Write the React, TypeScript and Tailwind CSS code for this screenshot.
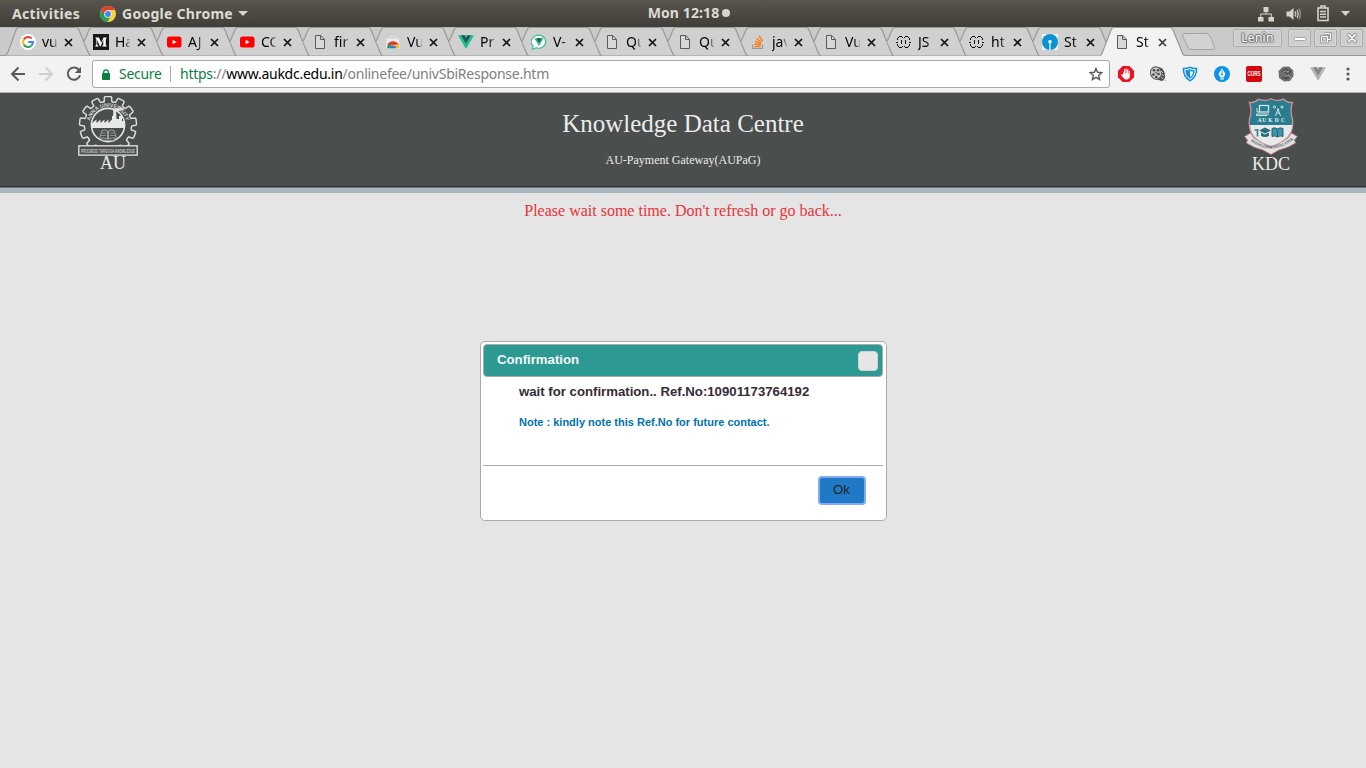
import type { ReactNode } from "react";

const ui = "font-['Noto_Sans','Open_Sans',sans-serif]";

function ChromeLogo() {
  return (
    <svg width="16" height="16" viewBox="0 0 16 16">
      <circle cx="8" cy="8" r="8" fill="#fdd13a" />
      <path d="M8 8 L1.1 4 A8 8 0 0 0 7.2 16 L11.2 9.8 Z" fill="#1fa05a" />
      <path d="M1.1 4 A8 8 0 0 1 14.9 4 L8 4 L4.9 10 Z" fill="#e0422f" />
      <circle cx="8" cy="8" r="3.8" fill="#f4f4f4" />
      <circle cx="8" cy="8" r="2.9" fill="#4285f4" />
    </svg>
  );
}

function GoogleIcon() {
  return (
    <svg width="16" height="16" viewBox="0 0 16 16" fill="none" strokeWidth="2.1">
      <circle cx="8" cy="8" r="8" fill="#fff" />
      <path d="M11.6 4.6 A5 5 0 0 0 3.7 5.5" stroke="#ea4335" />
      <path d="M3.7 5.5 A5 5 0 0 0 3.7 10.5" stroke="#fbbc05" />
      <path d="M3.7 10.5 A5 5 0 0 0 11.3 11.7" stroke="#34a853" />
      <path d="M11.3 11.7 A5 5 0 0 0 13 8 H8.2" stroke="#4285f4" />
    </svg>
  );
}

function MediumIcon() {
  return (
    <svg width="16" height="16" viewBox="0 0 16 16">
      <rect width="16" height="16" fill="#181818" />
      <path d="M2.5 3.5 H6 L8.3 8.7 L10.5 3.5 H13.7 V4.3 L12.8 5 V11 L13.7 11.7 V12.5 H9.3 V11.7 L10.3 11 V5.8 L7.6 12.4 H7.1 L4.2 6 V10.5 L5.4 12 V12.5 H2.3 V12 L3.4 10.5 V5.2 L2.5 4.2Z" fill="#fff" />
    </svg>
  );
}

function YoutubeIcon() {
  return (
    <svg width="16" height="16" viewBox="0 0 16 16">
      <rect x="1" y="2.5" width="14.5" height="11" rx="2.6" fill="#f00" />
      <path d="M6.6 5.7 L10.6 8 L6.6 10.3Z" fill="#fff" />
    </svg>
  );
}

function FileIcon() {
  return (
    <svg width="16" height="16" viewBox="0 0 16 16" fill="none" stroke="#5a5a5a">
      <path d="M3.5 1.5 H8.7 L12.5 5.3 V14.5 H3.5 Z" fill="#d8d8d8" />
      <path d="M8.5 1.5 V5.5 H12.5" />
    </svg>
  );
}

function StoreIcon() {
  return (
    <svg width="16" height="16" viewBox="0 0 16 16">
      <path d="M5 5 V2 H11 V5" fill="none" stroke="#ddd" strokeWidth="1.4" />
      <path d="M1.5 4.5 H14 L14.5 14.5 H1Z" fill="#ececec" />
      <path d="M2 14.3 A6 6 0 0 1 5 9 L8 14.3Z" fill="#22a35a" />
      <path d="M2.3 10.8 A6.2 6 0 0 1 13.7 10.8 L8 11.3Z" fill="#e33b2e" />
      <path d="M13.6 10.5 A6 6 0 0 1 14 14.3 H8 L10 10.5Z" fill="#fbc116" />
      <path d="M5 14.3 A3 2.8 0 0 1 11 14.3Z" fill="#3779e3" />
    </svg>
  );
}

function VueIcon({ outer = "#41b883", inner = "#34495e" }: { outer?: string; inner?: string }) {
  return (
    <svg width="16" height="16" viewBox="0 0 16 16">
      <path d="M0 1.3 H16 L8 15Z" fill={outer} />
      <path d="M3.2 1.3 H6.3 L8 4.2 L9.7 1.3 H12.8 L8 9.5Z" fill={inner} />
    </svg>
  );
}

function VueChatIcon() {
  return (
    <svg width="16" height="16" viewBox="0 0 16 16">
      <path d="M2.2 12.2 A7.3 6.5 0 1 1 5 13.8 L1.3 15.2Z" fill="#fff" stroke="#33bf8c" strokeWidth="1.1" />
      <path d="M3.4 4.2 H12.6 L8 12Z" fill="#27bd85" />
      <path d="M5.5 4.2 H10.5 L8 8.8Z" fill="#34495e" />
    </svg>
  );
}

function StackIcon() {
  return (
    <svg width="16" height="16" viewBox="0 0 16 16" fill="none">
      <path d="M2.5 10.5 V14.5 H12.5 V10.5" stroke="#999" strokeWidth="1.2" />
      <path d="M4.2 12.6 H10.6 M4.3 10 L10.6 11.3 M5 7.2 L11 10 M6.6 4.3 L11.6 8.5 M9 1.8 L12.6 7" stroke="#ff7a10" strokeWidth="1.4" />
    </svg>
  );
}

function BracesIcon() {
  return (
    <svg width="16" height="16" viewBox="0 0 16 16" fill="none" stroke="#111" shapeRendering="crispEdges">
      <path d="M3 2.5 H6 M9 2.5 H12 M3 13.5 H6 M9 13.5 H12 M2 3.5 H3 M6 3.5 H7 M8 3.5 H9 M12 3.5 H13 M2 12.5 H3 M6 12.5 H7 M8 12.5 H9 M12 12.5 H13 M0 8.5 H2 M13 8.5 H15" />
      <path d="M1.5 4 V6 M13.5 4 V6 M1.5 10 V12 M13.5 10 V12 M5.5 6 V10 M9.5 6 V10" />
    </svg>
  );
}

function SbiIcon() {
  return (
    <svg width="16" height="16" viewBox="0 0 16 16">
      <rect width="16" height="16" fill="#eef3f5" />
      <circle cx="8" cy="8" r="8" fill="#0c93cf" />
      <circle cx="8" cy="7.8" r="1.8" fill="#fff" />
      <path d="M7.4 8 H8.6 V16 H7.4Z" fill="#fff" />
    </svg>
  );
}

function CloseMark({ active }: { active?: boolean }) {
  return (
    <svg width="9" height="9" viewBox="0 0 9 9" stroke={active ? "#3c3c3c" : "#111"} strokeWidth="1.7">
      <path d="M1 1 L8 8 M8 1 L1 8" />
    </svg>
  );
}

const tabs: { icon: ReactNode; label: string }[] = [
  { icon: <GoogleIcon />, label: "vu" },
  { icon: <MediumIcon />, label: "Ha" },
  { icon: <YoutubeIcon />, label: "AJ" },
  { icon: <YoutubeIcon />, label: "CO" },
  { icon: <FileIcon />, label: "fir" },
  { icon: <StoreIcon />, label: "Vu" },
  { icon: <VueIcon outer="#16c28a" />, label: "Pr" },
  { icon: <VueChatIcon />, label: "V-" },
  { icon: <FileIcon />, label: "Qu" },
  { icon: <FileIcon />, label: "Qu" },
  { icon: <StackIcon />, label: "jav" },
  { icon: <FileIcon />, label: "Vu" },
  { icon: <BracesIcon />, label: "JS" },
  { icon: <BracesIcon />, label: "ht" },
  { icon: <SbiIcon />, label: "St" },
  { icon: <FileIcon />, label: "St" },
];

function Tab({ icon, label, first, active }: { icon: ReactNode; label: string; first: boolean; active: boolean }) {
  return (
    <div className={`relative flex h-[29px] shrink-0 items-center pt-px ${active ? "w-[72px] pl-[13px]" : "w-[73px] pl-3.5"}`}>
      <svg className="absolute -left-px top-0" width="88" height="29" viewBox="0 0 88 29">
        <path
          d={
            active
              ? "M-1 29 C0 28 1 27 2 25 L11 3 Q12 .5 14 .5 H70 Q72 .5 73 3 L82 25 Q83 28.5 85 28.5 V29Z"
              : first
                ? "M0 28.5 C1 28 2 27 3 25 L11 3 Q12 .5 14 .5 H71 Q73 .5 74 3 L83 25 Q84 28.5 86 28.5Z"
                : "M13 28.5 L6 14.5 L11 3 Q12 .5 14 .5 H71 Q73 .5 74 3 L83 25 Q84 28.5 86 28.5Z"
          }
          fill={active ? "#f2f2f2" : "#d0d0d0"}
        />
        <path
          d={
            active
              ? "M0 28.5 C1 28 2 27 2.5 25 L11 3 Q12 .5 14 .5 H70 Q72 .5 73 3 L82 25 Q83 28.5 85 28.5"
              : first
                ? "M0 28.5 C1 28 2 27 3 25 L11 3 Q12 .5 14 .5 H71 Q73 .5 74 3 L83 25 Q84 28.5 86 28.5"
                : "M6 14.5 L11 3 Q12 .5 14 .5 H71 Q73 .5 74 3 L83 25 Q84 28.5 86 28.5"
          }
          fill="none"
          stroke="#999"
          strokeWidth="1.2"
        />
      </svg>
      <div className="relative shrink-0">{icon}</div>
      <div className="relative ml-1.5 w-[15px] overflow-hidden whitespace-nowrap text-[14px] leading-5 text-black [mask-image:linear-gradient(to_right,black_60%,transparent_110%)]">
        {label}
      </div>
      <div className="relative ml-[7px]">
        <CloseMark active={active} />
      </div>
    </div>
  );
}

function TopBar() {
  return (
    <div className="grid h-[27px] grid-cols-[1fr_auto_1fr] items-center bg-linear-to-b from-[#58554d] to-[#403e38] text-[14px] font-bold text-[#dedbd3]">
      <div className="flex items-center pl-3">
        <span className="w-[68px] whitespace-nowrap tracking-[0.3px]">Activities</span>
        <span className="ml-5"><ChromeLogo /></span>
        <span className="ml-1.5 w-[111px] whitespace-nowrap tracking-[0.27px]">Google Chrome</span>
        <svg className="ml-[5px]" width="10" height="5" viewBox="0 0 10 5"><path d="M0 0 H10 L5 5Z" fill="#d8d5ce" /></svg>
      </div>
      <div className="flex items-center gap-[3px] pl-3">
        <span className="-mt-0.5 tracking-[0.1px]">Mon 12:18</span>
        <span className="-mt-px size-2 rounded-full bg-[#d8d5ce]" />
      </div>
      <div className="flex items-center justify-end pr-4">
        <svg width="16" height="16" viewBox="0 0 16 16" fill="#d6d3cc">
          <path d="M5.5 1 H10.5 V6 H8.5 V7.5 H13.8 V11 H16 V15.5 H10.5 V11 H12.8 V8.5 H3.2 V11 H5.5 V15.5 H0 V11 H2.2 V7.5 H7.5 V6 H5.5Z" />
        </svg>
        <svg className="ml-3" width="17" height="16" viewBox="0 0 17 16" fill="none" stroke="#c7c4bd" strokeWidth="1.4">
          <path d="M.5 5.5 H3.5 L7.5 2 V14 L3.5 10.5 H.5Z" fill="#d6d3cc" stroke="none" />
          <path d="M9 5.5 Q10.6 8 9 10.5 M11 4 Q13.3 8 11 12" />
          <path d="M13 2.5 Q16 8 13 13.5" stroke="#918e87" />
        </svg>
        <svg className="ml-3.5" width="12" height="17" viewBox="0 0 12 17" fill="none" stroke="#d6d3cc" strokeWidth="1.6">
          <path d="M4 2.5 V1 H8 V2.5 M1 3 H11 V15.5 H1Z M3 6.5 H9 M3 9.2 H9 M3 12 H9" />
        </svg>
        <svg className="ml-3" width="9" height="5" viewBox="0 0 9 5"><path d="M0 0 H9 L4.5 5Z" fill="#d6d3cc" /></svg>
      </div>
    </div>
  );
}

const winBtn = "flex h-[18px] items-center justify-center rounded-[2px] border border-[#aaa] bg-[#cecece] shadow-[inset_0_0_0_1px_#d8d8d8]";

function TabStrip() {
  return (
    <div className="flex h-[29px] bg-[#cacaca] pl-1.5 shadow-[inset_0_-1px_0_#999,inset_0_1px_0_#bdbdbd]">
      {tabs.map((t, i) => (
        <Tab key={i} icon={t.icon} label={t.label} first={i === 0} active={i === 15} />
      ))}
      <svg className="ml-2 mt-1.5 shrink-0" width="37" height="18" viewBox="0 0 37 18">
        <path d="M3 .5 H26 Q28 .5 29 3 L33.5 14 Q34 16.5 32 16.5 H10 Q8 16.5 7 14 L1.5 3 Q1 .5 3 .5Z" fill="#d2d2d2" stroke="#a3a3a3" />
      </svg>
      <div className="ml-auto mr-[3px] flex gap-[3px] pt-0.5">
        <div className={`${winBtn} mr-[3px] w-[49px] text-[12px] text-white`}>
          <span className="tracking-[0.3px] [text-shadow:1px_0_0_#777,-1px_0_0_#777,0_1px_0_#777,0_-1px_0_#777,0_0_2px_#555]">Lenin</span>
        </div>
        <div className={`${winBtn} w-[23px]`}>
          <svg width="12" height="12" viewBox="0 0 12 12"><rect x=".5" y="5.5" width="11" height="3" rx="1" fill="#fff" stroke="#999" strokeWidth=".8" /></svg>
        </div>
        <div className={`${winBtn} w-[23px]`}>
          <svg width="12" height="12" viewBox="0 0 12 12" fill="none">
            <path d="M4.5 1.5 H10.5 V7.5 H8 M1.5 4.5 H7.5 V10 H1.5Z" stroke="#8d8d8d" strokeWidth="2.4" />
            <path d="M4.5 1.5 H10.5 V7.5 H8 M1.5 4.5 H7.5 V10 H1.5Z" stroke="#fff" />
          </svg>
        </div>
        <div className={`${winBtn} w-[23px]`}>
          <svg width="12" height="12" viewBox="0 0 12 12" strokeLinecap="round">
            <path d="M2.5 2.5 L9.5 9.5 M9.5 2.5 L2.5 9.5" stroke="#8d8d8d" strokeWidth="3.2" />
            <path d="M2.5 2.5 L9.5 9.5 M9.5 2.5 L2.5 9.5" stroke="#fff" strokeWidth="1.7" />
          </svg>
        </div>
      </div>
    </div>
  );
}

function Extensions() {
  return (
    <div className="ml-2 flex items-center gap-4">
      <svg width="16" height="16" viewBox="0 0 16 16">
        <path d="M4.7 0 H11.3 L16 4.7 V11.3 L11.3 16 H4.7 L0 11.3 V4.7Z" fill="#ed1222" />
        <path d="M5 5 V9 L3.7 8 L3 8.8 L5.5 12 Q6.5 13.5 8.5 13.5 Q11.5 13.5 11.8 10.5 V4.7 H10.8 V7.5 H10.3 V3.2 H9.2 V7.3 H8.7 V2.5 H7.6 V7.3 H7.1 V3.3 H6 V8Z" fill="#fff" />
      </svg>
      <svg width="16" height="16" viewBox="0 0 16 16">
        <path d="M9 1 Q15 3 15 10 Q15 14.5 11.5 15 L6 13Z" fill="#4b4b4b" />
        <ellipse cx="6" cy="7" rx="5.5" ry="6.3" transform="rotate(-15 6 7)" fill="#cbcbcb" stroke="#555" />
        <g fill="#444"><circle cx="4" cy="4.3" r="1.3" /><circle cx="8" cy="4.3" r="1.3" /><circle cx="3.5" cy="8.5" r="1.3" /><circle cx="8.5" cy="8" r="1.3" /><circle cx="6.3" cy="11" r="1.3" /><circle cx="6" cy="6.6" r=".8" /></g>
        <path d="M11 5 L13 7 M11.5 8 L14 10 M11 11 L13.5 13 M14 14.5 H16" stroke="#ccc" />
      </svg>
      <svg width="16" height="16" viewBox="0 0 16 16">
        <path d="M8 .5 Q11 2 15.3 1.7 Q16 11 8 15.8 Q0 11 .7 1.7 Q5 2 8 .5Z" fill="#1591db" />
        <path d="M8 2.7 Q10.5 3.8 13.2 3.7 Q13.3 10 8 13.3 Q2.7 10 2.8 3.7 Q5.5 3.8 8 2.7Z" fill="none" stroke="#fff" />
        <path d="M8 5 Q9.8 5.7 11.2 5.6 Q11 9 8 11.2Z" fill="#fff" />
      </svg>
      <svg width="16" height="16" viewBox="0 0 16 16">
        <circle cx="8" cy="8" r="8" fill="#0c93e5" />
        <path d="M8 2.2 L11.5 8 L9.7 11.5 H6.3 L4.5 8Z M6.3 12.2 H9.7 V13.5 H6.3Z" fill="#fff" />
        <path d="M8 3.5 V8" stroke="#0c93e5" strokeWidth=".8" /><circle cx="8" cy="8.6" r="1" fill="#0c93e5" />
      </svg>
      <svg width="16" height="16" viewBox="0 0 16 16">
        <rect width="16" height="16" rx="2" fill="#d3070c" />
        <text x="8" y="10.4" textAnchor="middle" textLength="13" lengthAdjust="spacingAndGlyphs" fontFamily="Liberation Sans" fontWeight="bold" fontSize="6.8" fill="#fff">CORS</text>
      </svg>
      <svg width="16" height="16" viewBox="0 0 16 16" fill="none" stroke="#292929" strokeWidth=".7">
        <path d="M5 .7 L11 .5 L15.3 4.5 L15.5 10 L12 15 L6 15.5 L1 12 L.5 5Z" fill="#6e6e6e" stroke="none" />
        <path d="M4 5 L8 3 L13 6 M12 11 L8 13 L4 11 M4 5 L10 8 L8 13 M10 8 L13 6" />
        <path d="M5 6 L7 5 M9 6 L11 5 M8 10 L11 9 M11 10 L13 12" stroke="#c5c5c5" />
      </svg>
      <VueIcon outer="#b4b4b4" inner="#828282" />
      <svg width="4" height="14" viewBox="0 0 4 14" fill="#5a5a5a" className="ml-1">
        <circle cx="2" cy="2" r="1.6" /><circle cx="2" cy="7" r="1.6" /><circle cx="2" cy="12" r="1.6" />
      </svg>
    </div>
  );
}

function Toolbar() {
  return (
    <div className="flex h-[37px] items-center border-b border-[#b1b1b1] bg-[#f2f2f2]">
      <svg className="ml-2.5 shrink-0" width="16" height="16" viewBox="0 0 16 16" fill="none" stroke="#5a5a5a" strokeWidth="2"><path d="M15 8 H2.5 M8.5 1.5 L2 8 L8.5 14.5" /></svg>
      <svg className="ml-3 shrink-0" width="16" height="16" viewBox="0 0 16 16" fill="none" stroke="#d0d0d0" strokeWidth="2"><path d="M1 8 H13.5 M7.5 1.5 L14 8 L7.5 14.5" /></svg>
      <svg className="ml-3 shrink-0" width="16" height="16" viewBox="0 0 16 16" fill="none" stroke="#5a5a5a" strokeWidth="2"><path d="M12.7 3.5 A6.2 6.2 0 1 0 14 9.3" /><path d="M15 .8 V7 H8.8Z" fill="#5a5a5a" stroke="none" /></svg>
      <div className="ml-2.5 flex h-7 w-[1018px] shrink-0 items-center rounded-[3px] border border-[#a9a9a9] bg-white text-[14px]">
        <svg className="ml-[9px]" width="8" height="11" viewBox="0 0 8 11"><rect y="4" width="8" height="7" rx=".8" fill="#0b8043" /><path d="M1.7 4.5 V3 Q1.7 .8 4 .8 Q6.3 .8 6.3 3 V4.5" fill="none" stroke="#0b8043" strokeWidth="1.3" /></svg>
        <span className="-mt-0.5 ml-[9px] w-[43px] whitespace-nowrap tracking-[-0.3px] text-[#0b8043]">Secure</span>
        <span className="ml-2 h-4 w-px bg-[#aaa]" />
        <span className="-mt-0.5 ml-[9px] whitespace-nowrap tracking-[-0.255px] text-[#808080]">
          <span className="text-[#0b8043]">https</span>://<span className="text-black">www.aukdc.edu.in</span>/onlinefee/univSbiResponse.htm
        </span>
        <svg className="ml-auto mr-1.5" width="14" height="14" viewBox="0 0 14 14" fill="none" stroke="#5a5a5a" strokeWidth="1.4"><path d="M7 1.5 L8.6 5.3 L12.8 5.7 L9.6 8.4 L10.6 12.5 L7 10.3 L3.4 12.5 L4.4 8.4 L1.2 5.7 L5.4 5.3Z" /></svg>
      </div>
      <Extensions />
    </div>
  );
}

const toothCount = 13;

// Closed gear outline: wide teeth on a rim, one tooth pointing straight up.
const gearPath = Array.from({ length: toothCount }, (_, i) => {
  const pt = (r: number, deg: number) => {
    const a = ((i * 360) / toothCount + deg - 90) * (Math.PI / 180);
    return `${(30 + r * Math.cos(a)).toFixed(2)} ${(29 + r * Math.sin(a)).toFixed(2)}`;
  };
  return `${i ? "L" : "M"}${pt(24, -9)} L${pt(27.8, -7.5)} Q${pt(28.6, -6.5)} ${pt(28.6, -5)} L${pt(28.6, 5)} Q${pt(28.6, 6.5)} ${pt(27.8, 7.5)} L${pt(24, 9)} Q${pt(23, 13.8)} ${pt(24, 18.6)}`;
}).join(" ");

function AnnaLogo() {
  return (
    <svg width="60" height="60" viewBox="0 0 60 60">
      <path d={gearPath + "Z"} fill="#4a4e4c" stroke="#d9dcdc" strokeWidth="1.5" />
      <circle cx="30" cy="29" r="16.6" fill="#4a4e4c" stroke="#e4e6e6" strokeWidth="1.6" />
      <path d="M14 32 V27 L18.5 23.5 V27 L22.5 23.5 V27 L26.5 23.5 V27 L30.5 23.5 V27 L34 23.5 V20 H35 L35.5 14 H38 L38.5 23 H41 V20 H44 V25 H46 V32Z" fill="#e6e8e8" />
      <path d="M35 15 Q36 11 40 12.5 Q43 10 46 13 Q41 16 36 15Z" fill="#dfe2e2" />
      <path d="M24 34.5 Q27 33 29.5 35 V43 Q26 41 21.5 42.5Z M36 34.5 Q33 33 30.5 35 V43 Q34 41 38.5 42.5Z M23 44 L37 45" fill="none" stroke="#9fa4a4" />
      <path d="M24 37 L28 37 M23 39.5 H28 M32 37 H36 M32 39.5 H37" stroke="#8a9090" />
      <defs><path id="anna-arc" d="M11.7 29 A18.3 18.3 0 0 1 48.3 29" /></defs>
      <text fontFamily="Liberation Sans" fontWeight="bold" fontSize="5.4" fill="#d0d4d4">
        <textPath href="#anna-arc" startOffset="4" textLength="49" lengthAdjust="spacingAndGlyphs">ANNA UNIVERSITY</textPath>
      </text>
      <rect x=".8" y="49.8" width="58.4" height="9.3" fill="#4a4e4c" stroke="#d9dcdc" strokeWidth="1.4" />
      <text x="30" y="56.5" textAnchor="middle" textLength="54" lengthAdjust="spacingAndGlyphs" fontFamily="Liberation Sans" fontWeight="bold" fontSize="5.6" fill="#c3c8c8">PROGRESS THROUGH KNOWLEDGE</text>
    </svg>
  );
}

function KdcLogo() {
  return (
    <svg width="54" height="58" viewBox="0 0 54 58">
      <path d="M.6 38.5 L6.5 35 L10 40 L27 50 L44 40 L47.5 35 L53.4 38.5 L50.5 42 L51.5 45 Q44 50 35 52 L27 56.5 L19 52 Q10 50 2.5 45 L3.5 42Z" fill="#e4e3e2" stroke="#bb7883" strokeWidth=".9" />
      <path d="M5.5 4.5 Q11 5 14.5 1 Q21 4 27 .8 Q33 4 39.5 1 Q43 5 48.5 4.5 Q45.5 12 48.5 21 Q50 34 42 41 Q35 46 27 49 Q19 46 12 41 Q4 34 5.5 21 Q8.5 12 5.5 4.5Z" fill="#2a7d8e" stroke="#d4929d" strokeWidth="1.3" />
      <path d="M6 27 H48.3 Q47.5 36 41 41 Q35 46 27 48.3 Q19 46 13 41 Q6.5 36 6 27Z" fill="#e8eae9" />
      <g fill="none" stroke="#cfe3e7">
        <rect x="15.5" y="7.5" width="9" height="6.5" strokeWidth="1.3" /><path d="M12.5 16 H24.5 L23 17.5 H12.5Z M13 10 V14 H15" />
        <path d="M34 12 V10 M31.5 18 L34 11 L36.5 18 M32.5 15 H35.5" /><circle cx="30.5" cy="9" r="1.1" /><circle cx="38" cy="9" r="1.1" />
      </g>
      <text x="27.3" y="23.8" textAnchor="middle" textLength="27" fontFamily="Liberation Serif" fontWeight="bold" fontSize="5.4" fill="#e5f2f3">AU K D C</text>
      <path d="M15 32.5 L21 29.5 L27 32.5 L21 35.5Z M17 34.5 V38 Q21 40 25 38 V34.5 L21 36.5Z" fill="#276f79" />
      <path d="M13.5 31 V38.5 M10.5 32 H13.5" stroke="#387985" strokeWidth="1.6" />
      <path d="M28 30.5 Q31 29 33.5 31 Q36 29 39 30.5 V38.5 Q36 37 33.5 39 Q31 37 28 38.5Z" fill="#3b93ac" stroke="#25636f" />
      <path d="M33.5 31.5 V38.5" stroke="#24657b" />
      <defs><path id="kdc-arc" d="M5 42 Q27 59 49 42" /></defs>
      <text fontFamily="Liberation Serif" fontWeight="bold" fontSize="4" fill="#46545a">
        <textPath href="#kdc-arc" startOffset="2" textLength="49" lengthAdjust="spacingAndGlyphs">KNOWLEDGE DATA CENTRE</textPath>
      </text>
    </svg>
  );
}

function PageHeader() {
  return (
    <header className="grid h-[100px] grid-cols-[1fr_auto_1fr] border-b-[5px] border-[#a6b6bc] bg-[#4a4e4c] text-[#ececec] shadow-[inset_0_-1px_0_#707a7d,inset_0_-2px_0_#2c2e2d]">
      <div className="pl-[78px] pt-[3px]">
        <AnnaLogo />
        <div className="-mt-[3px] pl-[22px] text-[18px] leading-5">AU</div>
      </div>
      <div className="text-center">
        <h1 className="mt-4 text-[25px] leading-[30px]">Knowledge Data Centre</h1>
        <div className="mt-[14px] text-[12px] leading-[14px]">AU-Payment Gateway(AUPaG)</div>
      </div>
      <div className="mr-[68px] w-[54px] justify-self-end pt-[5px]">
        <KdcLogo />
        <div className="-mt-[2px] text-center text-[18px] leading-5">KDC</div>
      </div>
    </header>
  );
}

function Dialog() {
  return (
    <section className="mx-auto mt-[120px] h-[180px] w-[407px] rounded-[5px] border border-[#aaa] bg-white py-0.5 pl-0.5 pr-[3px] font-['Liberation_Sans',sans-serif] text-[13.2px]">
      <div className="flex h-[33px] items-center justify-between rounded-[4px] border border-[#aaa] bg-[#2c9a93] pl-[13.5px] pr-1 font-bold text-[#f5f9f9]">
        <span className="-mt-0.5">Confirmation</span>
        <span className="size-5 rounded-[4px] border border-[#d3d3d3] bg-[#e6e6e6]" />
      </div>
      <div className="h-[88px] pl-[36.5px] pt-[7px] font-bold text-[#362b36]">
        <p className="leading-[15px]">wait for confirmation.. Ref.No:10901173764192</p>
        <p className="mt-4 text-[11px] leading-[14px] text-[#0073af]">Note : kindly note this Ref.No for future contact.</p>
      </div>
      <div className="flex justify-end border-t border-[#aaa] pr-[17px] pt-2.5">
        <button className="h-[29px] w-12 rounded-[4px] border-2 border-[#86aaf2] bg-[#2079c7] pb-0.5 text-[#222]">Ok</button>
      </div>
    </section>
  );
}

export default function App() {
  return (
    <div className="flex h-screen w-screen flex-col overflow-hidden bg-[#e5e5e5]">
      <div className={ui}>
        <TopBar />
        <TabStrip />
        <Toolbar />
      </div>
      <main className="font-['Liberation_Serif',serif]">
        <PageHeader />
        <p className="mt-2 text-center text-[16px] leading-5 text-[#e73439]">Please wait some time. Don't refresh or go back...</p>
        <Dialog />
      </main>
    </div>
  );
}
